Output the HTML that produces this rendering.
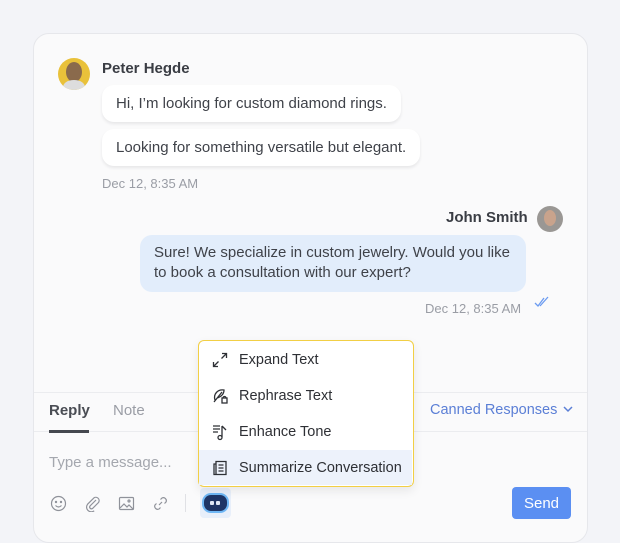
<!DOCTYPE html>
<html><head><style>
*{box-sizing:border-box;margin:0;padding:0}
body{width:620px;height:526px;background:#f3f4f8;font-family:"Liberation Sans",sans-serif;position:relative;overflow:hidden;color:#3a3d44}
.card{position:absolute;left:33px;top:33px;width:555px;height:510px;background:#fafafb;border:1px solid #e6e7eb;border-radius:16px}
.abs{position:absolute}
.bub{position:absolute;background:#fff;border-radius:12px;box-shadow:0 2px 3px rgba(0,0,0,.08);font-size:15px;color:#3f4249;padding:0 14px;height:37px;line-height:37px;white-space:nowrap}
.ts{position:absolute;font-size:13px;color:#9a9da5}
.menu{position:absolute;left:198px;top:340px;width:216px;height:147px;background:#fff;border:1.5px solid #f2cf45;border-radius:6px;box-shadow:0 4px 10px rgba(0,0,0,.08)}
.mi{position:absolute;left:0;width:213px;height:36px;font-size:14.5px;color:#2e3035;line-height:36px;padding-left:40px;white-space:nowrap}
.mi svg{position:absolute;left:13px;top:10px}
</style></head><body>
<div class="card"></div>
<div class="abs" style="left:58px;top:58px;width:32px;height:32px;border-radius:50%;background:#e9c13a;overflow:hidden"><div style="position:absolute;left:8px;top:4px;width:16px;height:20px;border-radius:50%;background:#8a6a4c"></div><div style="position:absolute;left:5px;top:22px;width:22px;height:14px;border-radius:50%;background:#ddd"></div></div>
<div class="abs" style="left:102px;top:60px;font-size:15px;font-weight:bold;color:#3a3d44">Peter Hegde</div>
<div class="bub" style="left:102px;top:85px">Hi, I’m looking for custom diamond rings.</div>
<div class="bub" style="left:102px;top:129px">Looking for something versatile but elegant.</div>
<div class="ts" style="left:102px;top:176px">Dec 12, 8:35 AM</div>

<div class="abs" style="left:446px;top:209px;font-size:15px;font-weight:bold;color:#3a3d44">John Smith</div>
<div class="abs" style="left:537px;top:206px;width:26px;height:26px;border-radius:50%;background:#9a9794;overflow:hidden"><div style="position:absolute;left:7px;top:4px;width:12px;height:16px;border-radius:50%;background:#c9a38c"></div></div>
<div class="abs" style="left:140px;top:235px;width:386px;height:57px;background:#e2edfb;border-radius:12px;font-size:15px;line-height:20px;color:#3f4249;padding:8px 14px">Sure! We specialize in custom jewelry. Would you like to book a consultation with our expert?</div>
<div class="ts" style="left:425px;top:301px">Dec 12, 8:35 AM</div>
<svg class="abs" style="left:534px;top:296px" width="16" height="12" viewBox="0 0 16 12"><path d="M1 7l3 3 6-8M6 10l8-9" stroke="#6b9bf0" stroke-width="1.3" fill="none"/></svg>

<div class="abs" style="left:34px;top:392px;width:553px;height:1px;background:#ebecef"></div>
<div class="abs" style="left:34px;top:431px;width:553px;height:1px;background:#ebecef"></div>
<div class="abs" style="left:49px;top:402px;font-size:15px;font-weight:bold;color:#4a4d54">Reply</div>
<div class="abs" style="left:49px;top:432px;width:40px;height:3px;background:#45484f;margin-top:-2px"></div>
<div class="abs" style="left:113px;top:402px;font-size:15px;color:#9a9da5">Note</div>
<div class="abs" style="left:430px;top:402px;font-size:14.5px;color:#5b7fd6;white-space:nowrap">Canned Responses</div>
<svg class="abs" style="left:563px;top:405px" width="10" height="8" viewBox="0 0 10 8"><path d="M1 2l4 4 4-4" stroke="#5b7fd6" stroke-width="1.5" fill="none"/></svg>
<div class="abs" style="left:49px;top:454px;font-size:15px;color:#a4a7ae">Type a message...</div>

<svg class="abs" style="left:50px;top:495px" width="17" height="17" viewBox="0 0 17 17" fill="none" stroke="#8f929a" stroke-width="1.2"><circle cx="8.5" cy="8.5" r="7"/><circle cx="6" cy="7" r=".6"/><circle cx="11" cy="7" r=".6"/><path d="M5.5 10.5q3 3 6 0"/></svg>
<svg class="abs" style="left:84px;top:495px" width="17" height="17" viewBox="0 0 17 17" fill="none" stroke="#8f929a" stroke-width="1.2"><path d="M12 5L6 11a1.8 1.8 0 0 0 2.5 2.5l6-6a3.3 3.3 0 0 0-4.6-4.6L3.6 9.2a4.7 4.7 0 0 0 6.6 6.6"/></svg>
<svg class="abs" style="left:118px;top:495px" width="17" height="17" viewBox="0 0 17 17" fill="none" stroke="#8f929a" stroke-width="1.2"><rect x="1.5" y="2.5" width="14" height="12" rx="1"/><path d="M2 13l4-4 3 3 2-2 4 4"/><circle cx="11" cy="6" r="1"/></svg>
<svg class="abs" style="left:152px;top:495px" width="17" height="17" viewBox="0 0 17 17" fill="none" stroke="#8f929a" stroke-width="1.2"><path d="M7 10l3-3M8.5 4.5l1.5-1.5a3 3 0 0 1 4 4L12.5 8.5M8.5 12.5L7 14a3 3 0 0 1-4-4l1.5-1.5"/></svg>
<div class="abs" style="left:185px;top:494px;width:1px;height:18px;background:#e0e1e5"></div>
<div class="abs" style="left:200px;top:488px;width:31px;height:30px;background:#e8effa;border-radius:4px"></div>
<div class="abs" style="left:204px;top:495px;width:23px;height:16px;border-radius:7px;background:#1e3566;box-shadow:0 0 0 2px #6fb7f5"></div>
<div class="abs" style="left:210px;top:501px;width:4px;height:4px;background:#dfe8f7;border-radius:1px"></div>
<div class="abs" style="left:216px;top:501px;width:4px;height:4px;background:#dfe8f7;border-radius:1px"></div>
<div class="abs" style="left:512px;top:487px;width:59px;height:32px;background:#5b8ff2;border-radius:4px;color:#fff;font-size:15px;display:flex;align-items:center;justify-content:center">Send</div>

<div class="menu">
<div class="mi" style="top:1px"><svg width="16" height="16" viewBox="0 0 16 16" fill="none" stroke="#2e3035" stroke-width="1.3"><path d="M10 1.5h4.5V6M14.5 1.5L9.5 6.5M6 14.5H1.5V10M1.5 14.5l5-5"/></svg>Expand Text</div>
<div class="mi" style="top:37px"><svg width="17" height="16" viewBox="0 0 17 16" fill="none" stroke="#2e3035" stroke-width="1.3"><path d="M2 14L10 4M3 12C1 6 6 1 12 2c0 4-3 7-7 8"/><rect x="10" y="10" width="5" height="5"/><path d="M11 10a1.5 1.5 0 0 1 3 0"/></svg>Rephrase Text</div>
<div class="mi" style="top:73px"><svg width="16" height="17" viewBox="0 0 16 17" fill="none" stroke="#2e3035" stroke-width="1.3"><path d="M1 2h7M1 5h7M1 8h5M10 2v11M10 2l4 4"/><circle cx="8" cy="13.5" r="2"/></svg>Enhance Tone</div>
<div class="mi" style="top:109px;background:#edf2fb;height:35px;width:213px"><svg width="16" height="16" viewBox="0 0 16 16" fill="none" stroke="#2e3035" stroke-width="1.3"><path d="M4 1.5h10v13H4zM4 4H2v10.5h2M6.5 5h5M6.5 8h5M6.5 11h5"/></svg>Summarize Conversation</div>
</div>
</body></html>
